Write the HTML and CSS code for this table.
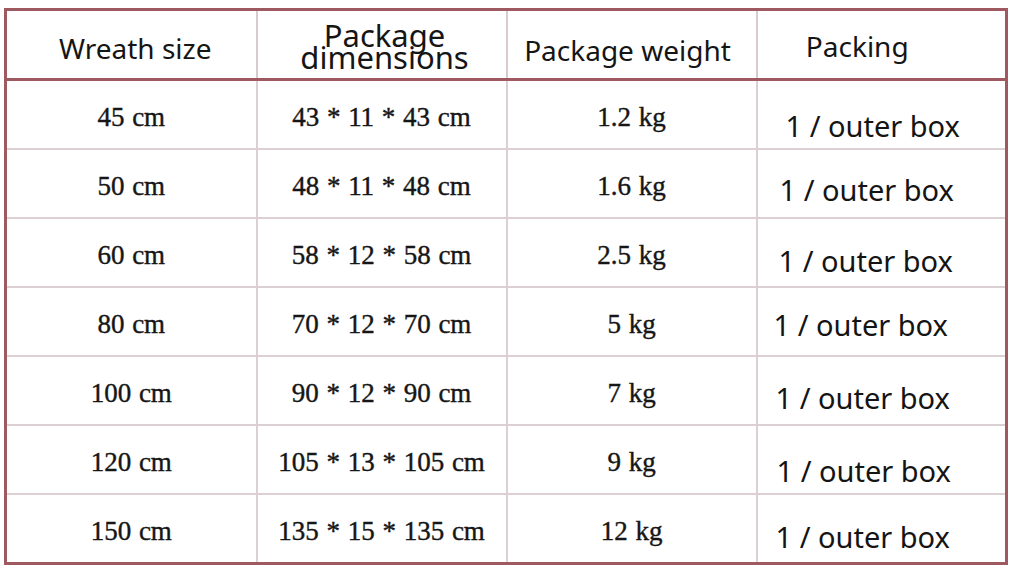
FILE: index.html
```html
<!DOCTYPE html>
<html>
<head>
<meta charset="utf-8">
<link rel="stylesheet" href="styles.css">
</head>
<body>
<div class="wrap">
<table class="spec">
  <colgroup><col class="c1"><col class="c2"><col class="c3"><col class="c4"></colgroup>
  <thead>
    <tr>
      <th><span class="h-size">Wreath size</span></th>
      <th><span class="h-dim">Package<br>dimensions</span></th>
      <th><span class="h-weight">Package weight</span></th>
      <th><span class="h-pack">Packing</span></th>
    </tr>
  </thead>
  <tbody>
    <tr><td>45 cm</td><td>43 * 11 * 43 cm</td><td>1.2 kg</td><td class="pack"><span class="p1">1 / outer box</span></td></tr>
    <tr><td>50 cm</td><td>48 * 11 * 48 cm</td><td>1.6 kg</td><td class="pack"><span class="p2">1 / outer box</span></td></tr>
    <tr><td>60 cm</td><td>58 * 12 * 58 cm</td><td>2.5 kg</td><td class="pack"><span class="p3">1 / outer box</span></td></tr>
    <tr><td>80 cm</td><td>70 * 12 * 70 cm</td><td>5 kg</td><td class="pack"><span class="p4">1 / outer box</span></td></tr>
    <tr><td>100 cm</td><td>90 * 12 * 90 cm</td><td>7 kg</td><td class="pack"><span class="p5">1 / outer box</span></td></tr>
    <tr><td>120 cm</td><td>105 * 13 * 105 cm</td><td>9 kg</td><td class="pack"><span class="p6">1 / outer box</span></td></tr>
    <tr><td>150 cm</td><td>135 * 15 * 135 cm</td><td>12 kg</td><td class="pack"><span class="p7">1 / outer box</span></td></tr>
  </tbody>
</table>
</div>
</body>
</html>
```
FILE: styles.css
```css
html, body {
  margin: 0;
  padding: 0;
  background: #ffffff;
}
.wrap {
  padding: 8px 0 0 4px;
}
.spec {
  border-collapse: collapse;
  width: 1001px;
  table-layout: fixed;
  border: 3px solid #9e5a60;
}
.c1 { width: 251px; }
.c2, .c3, .c4 { width: 250px; }
.spec th {
  height: 67px;
  padding: 0;
  border-left: 2px solid #d9cacd;
  border-bottom: 3px solid #9e5a60;
  font-family: "Noto Sans", "DejaVu Sans", sans-serif;
  font-weight: 400;
  font-size: 28px;
  color: #151515;
  text-align: center;
  vertical-align: middle;
  line-height: 1.2;
}
.spec th:first-child { border-left: none; }
.h-size { position: relative; top: 4px; left: 4px; }
.h-dim {
  display: inline-block;
  font-size: 31px;
  line-height: 22px;
  position: relative;
  left: 3px;
  top: 5px;
}
.h-weight { position: relative; top: 6px; left: -4px; }
.h-pack { position: relative; top: 2px; left: -24px; }
.spec td {
  height: 67px;
  padding: 0;
  border: 2px solid #ddd0d3;
  font-family: "Liberation Serif", "Times New Roman", serif;
  font-size: 27px;
  word-spacing: 1px;
  color: #161616;
  -webkit-text-stroke: 0.4px #161616;
  text-align: center;
  vertical-align: middle;
  line-height: 1.15;
}
.spec tbody td:first-child { border-left: none; }
.spec tbody tr:last-child td { border-bottom: none; }
.spec td span { position: relative; }
.spec td.pack {
  border-right: none;
  text-align: left;
  font-family: "Noto Sans", "DejaVu Sans", sans-serif;
  font-size: 29px;
  word-spacing: 0;
  color: #141414;
  -webkit-text-stroke: 0;
}
.p1 { left: 28px; top: 11px; }
.p2 { left: 22px; top: 6px; }
.p3 { left: 21px; top: 8px; }
.p4 { left: 16px; top: 3px; }
.p5 { left: 18px; top: 7px; }
.p6 { left: 19px; top: 11px; }
.p7 { left: 18px; top: 8px; }
.spec tbody td:not(.pack) { padding-top: 6px; height: 61px; }
```
